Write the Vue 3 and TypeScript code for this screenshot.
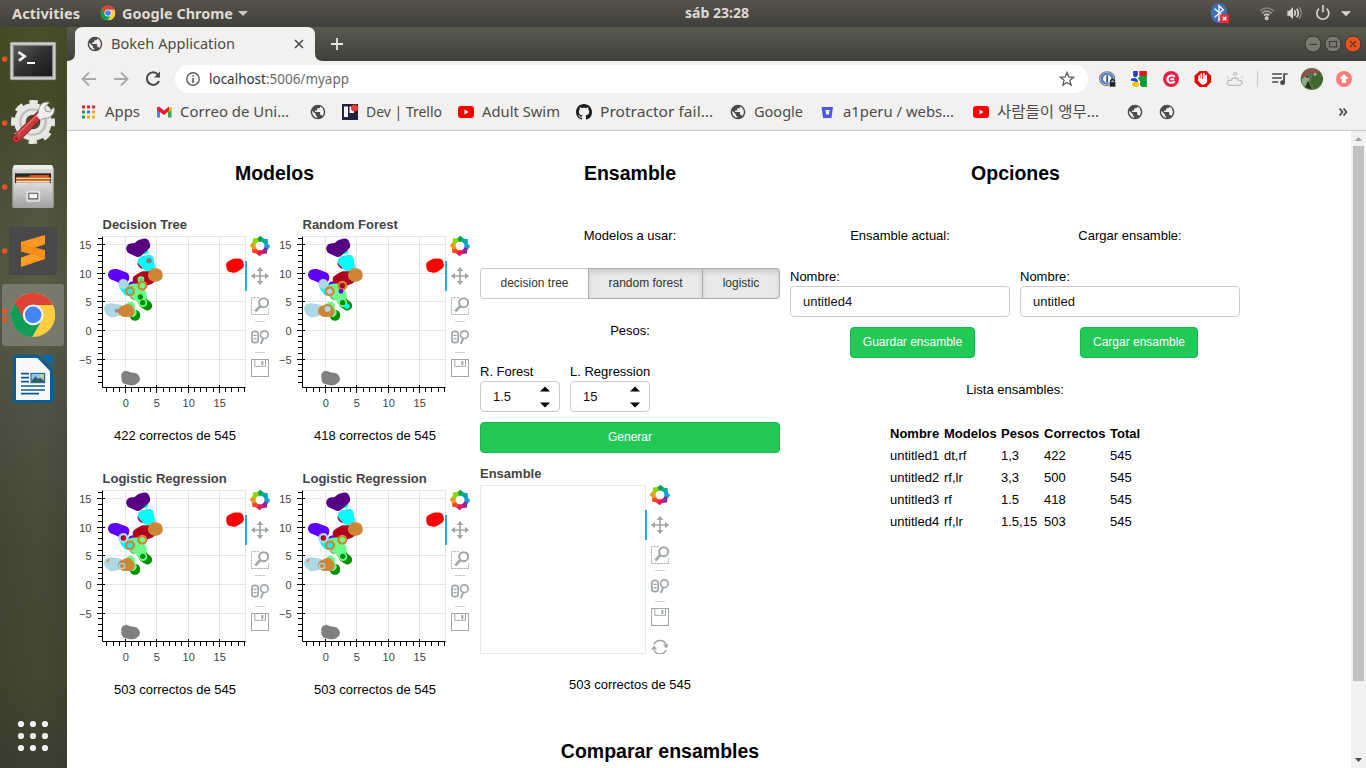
<script setup lang="ts">
import { ref } from 'vue'

type Dot = [number, number, number, string]
type Blob = [string, number, string]

interface Bookmark {
  icon: string
  text?: string
  textWidth?: number
  width: number
}

interface Plot {
  title: string
  caption: string
  extra: Dot[]
}

const bookmarks: Bookmark[] = [
  { icon: 'apps', text: 'Apps', textWidth: 35, width: 76 },
  { icon: 'gmail', text: 'Correo de Uni…', textWidth: 109, width: 154 },
  { icon: 'globe', width: 32 },
  { icon: 'trello', text: 'Dev | Trello', textWidth: 76, width: 116 },
  { icon: 'youtube', text: 'Adult Swim', textWidth: 78, width: 118 },
  { icon: 'github', text: 'Protractor fail…', textWidth: 113, width: 154 },
  { icon: 'globe', text: 'Google', textWidth: 49, width: 89 },
  { icon: 'bitbucket', text: 'a1peru / webs…', textWidth: 111, width: 154 },
  { icon: 'youtube', text: '사람들이 앵무…', textWidth: 102, width: 154 },
  { icon: 'globe', width: 32 },
  { icon: 'globe', width: 32 },
]

const INDIGO = '#560082'
const CYAN = '#00ffff'
const CRIMSON = '#b00020'
const VIOLET = '#5f00ff'
const SKY = '#add8e6'
const LIME = '#6bff8b'
const GREEN = '#009000'
const PERU = '#cd8734'
const GREY = '#808080'
const RED = '#ff0000'

// Clusters as [outline, marker diameter, colour], back to front.
const clusters: Blob[] = [
  ['M225 124V123', 18, CYAN],
  ['M184 116 204 125 225 106 223 101 212 104 200 114Z', 31, INDIGO],
  ['M216 160 218 163', 27, CRIMSON],
  ['M247 172 244 180', 25, SKY],
  ['M219 154 236 150 238 165 231 167Z', 31, CYAN],
  ['M188 228 190 232', 28, VIOLET],
  ['M190 258 194 260', 20, GREY],
  ['M130 194 138 193 162 202 160 208 143 199Z', 32, VIOLET],
  ['M163 230 173 243', 29, CYAN],
  ['M204 209 220 199 236 199 241 206 222 214 207 215Z', 31, CRIMSON],
  ['M254 195 258 195', 41, PERU],
  ['M195 315 195 317', 31, GREEN],
  ['M217 273 221 279 232 287', 29, GREEN],
  ['M187 236 201 235 213 248 216 258 208 261 194 252Z', 29, LIME],
  ['M181 290V291', 30, LIME],
  ['M186 305 187 308', 26, LIME],
  ['M217 276 219 278', 26, LIME],
  ['M118 296 121 302 127 306 146 301 148 300 126 296Z', 32, SKY],
  ['M159 303 172 297 175 298 179 305 163 306Z', 30, PERU],
  ['M168 497 169 508 180 511 190 511 195 507 193 503 175 500Z', 29, GREY],
  ['M483 166 484 172 493 174 507 165 506 160 495 160Z', 29, RED],
]

const logistic: Dot[] = [
  [160, 222, 15, SKY], [160, 222, 8, CRIMSON],
  [180, 244, 15, PERU], [180, 244, 8, CYAN],
  [217, 227, 15, PERU], [217, 227, 8, LIME],
  [218, 277, 8, GREEN],
  [116, 292, 6, PERU], [119, 295, 6, SKY],
  [156, 306, 10, SKY], [156, 306, 6, PERU],
]

const plots: Plot[] = [
  {
    title: 'Decision Tree',
    caption: '422 correctos de 545',
    extra: [
      [237, 152, 8, GREY], [160, 222, 15, SKY],
      [180, 244, 15, PERU], [180, 244, 8, CYAN],
      [213, 209, 10, LIME], [213, 209, 5, '#55d060'],
      [217, 227, 15, PERU], [217, 227, 8, LIME],
      [211, 261, 8, GREEN], [218, 278, 8, GREEN], [140, 302, 6, '#9b8b8b'],
    ],
  },
  {
    title: 'Random Forest',
    caption: '418 correctos de 545',
    extra: [
      [160, 222, 15, SKY],
      [179, 244, 15, PERU], [179, 244, 8, SKY],
      [217, 227, 15, PERU], [217, 227, 8, CRIMSON],
      [213, 244, 7, VIOLET], [218, 278, 8, GREEN],
      [231, 289, 8, CYAN], [173, 297, 9, SKY],
    ],
  },
  { title: 'Logistic Regression', caption: '503 correctos de 545', extra: logistic },
  { title: 'Logistic Regression', caption: '503 correctos de 545', extra: logistic },
]

const xs = [0, 5, 10, 15]
const ys = [15, 10, 5, 0, -5]
const px = (v: number) => 55.5 + Math.round(v * 6.25)
const py = (v: number) => 120.5 - Math.round(v * 5.74)
const minorX = Array.from({ length: 23 }, (_, i) => i - 3)
const minorY = Array.from({ length: 26 }, (_, i) => i - 9)
const label = (v: number) => (v < 0 ? '−' + -v : String(v))

const petals = ['#00a651', '#00a99d', '#1b9de2', '#92278f', '#ed145b', '#f1481e', '#f7941d', '#8dd600']

const choices = ref([
  { name: 'decision tree', on: false, width: 108 },
  { name: 'random forest', on: true, width: 115 },
  { name: 'logistic', on: true, width: 77 },
])
const rf = ref('1.5')
const lr = ref('15')
const saveName = ref('untitled4')
const loadName = ref('untitled')

const rows = [
  ['untitled1', 'dt,rf', '1,3', '422', '545'],
  ['untitled2', 'rf,lr', '3,3', '500', '545'],
  ['untitled3', 'rf', '1.5', '418', '545'],
  ['untitled4', 'rf,lr', '1.5,15', '503', '545'],
]
</script>

<template>
  <svg class="defs" width="0" height="0">
    <defs>
      <linearGradient id="metal" x1="0" y1="0" x2="0" y2="1">
        <stop offset="0" stop-color="#dcdcda" /><stop offset="1" stop-color="#a3a3a1" />
      </linearGradient>
      <linearGradient id="screen" x1="0" y1="0" x2="1" y2="1">
        <stop offset="0" stop-color="#5a5a5a" /><stop offset="0.5" stop-color="#303030" /><stop offset="1" stop-color="#181818" />
      </linearGradient>
      <symbol id="chrome" viewBox="-66 -66 132 132">
        <circle r="66" fill="#ffcd40" />
        <path d="M-57-33A66 66 0 0 1 57-33L60-29H0L-26 15Z" fill="#db4437" />
        <path d="M-55-36A66 66 0 0 0-3 66L26 15 0 20-26 15Z" fill="#0f9d58" />
        <circle r="31" fill="#f1f1f1" /><circle r="24.5" fill="#4285f4" />
      </symbol>
      <symbol id="globe" viewBox="1 1 22 22">
        <path fill="#4b4b4b" d="M12 2C6.480 2 2 6.480 2 12s4.480 10 10 10 10-4.480 10-10S17.520 2 12 2zm-1 17.930c-3.950-.49-7-3.850-7-7.930 0-.62.08-1.210.21-1.790L9 15v1c0 1.100.9 2 2 2v1.930zm6.900-2.540c-.26-.81-1-1.390-1.900-1.390h-1v-3c0-.55-.45-1-1-1H8v-2h2c.55 0 1-.45 1-1V7h2c1.100 0 2-.9 2-2v-.41c2.930 1.190 5 4.060 5 7.410 0 2.080-.8 3.970-2.100 5.390z" />
      </symbol>
      <symbol id="tools" viewBox="0 0 72 540">
        <g transform="translate(36 30)">
          <path v-for="(c, i) in petals" :key="c" d="M-11-20 1-31 12-22 8-13-8-13Z" :fill="c" :transform="`rotate(${i * 45})`" />
        </g>
        <g fill="none" stroke="#a1a6a9" stroke-width="5">
          <path d="M11 120H61M36 95V145" />
          <g fill="#a1a6a9" stroke="none"><path d="M36 93 46 105H26ZM36 147 46 135H26ZM9 120 21 110V130ZM63 120 51 110V130Z" /></g>
          <path d="M32 185H10.500V235.500H61.500V220" stroke-width="3" stroke-dasharray="6 3" />
          <circle cx="47" cy="200" r="13.500" stroke-width="6" /><path d="M37 210 22 226" stroke-width="8" />
          <path d="M21 256.500H51M21 349.500H51" stroke="#cfcfcf" stroke-width="3" />
          <rect x="11.500" y="286" width="19" height="34" rx="9" stroke-width="5" />
          <path d="M16 298H26M16 308H26" stroke-width="4" />
          <circle cx="49" cy="296" r="11.500" stroke-width="5" /><path d="M46 307 38 324" stroke-width="6" />
          <rect x="10.500" y="370.500" width="51" height="51" stroke-width="3" />
          <path d="M20.500 371V391H52.500V371" stroke-width="3" /><path d="M43 375V387" stroke-width="6" />
        </g>
      </symbol>
    </defs>
  </svg>

  <div class="desktop">
    <header class="topbar">
      <svg class="menu" width="260" height="27">
        <text x="12" y="18.500" textLength="68" lengthAdjust="spacingAndGlyphs">Activities</text>
        <use href="#chrome" x="100.500" y="5.500" width="15" height="15" />
        <text x="122" y="18.500" textLength="111" lengthAdjust="spacingAndGlyphs">Google Chrome</text>
        <path d="M238 11H248L243 16Z" fill="#cfccc5" />
      </svg>
      <svg class="clock" width="64" height="27">
        <text x="0" y="18" textLength="64" lengthAdjust="spacingAndGlyphs">sáb 23:28</text>
      </svg>
      <svg class="status" width="161" height="27" viewBox="135 0 483 81">
        <rect x="153" y="9" width="48" height="60" rx="24" fill="#3f72ad" />
        <path d="M164 26 190 49 177 61V17L190 29 164 52" fill="none" stroke="#fff" stroke-width="4" />
        <rect x="180" y="43" width="27" height="26" rx="4" fill="#e0343c" /><path d="M188 50 199 61M199 50 188 61" stroke="#fff" stroke-width="4" />
        <g fill="none" stroke="#d6d3cc" stroke-width="5">
          <path d="M300 33Q320 15 341 33" stroke="#85827b" /><path d="M306 40Q320 27 335 40" stroke="#a09d96" /><path d="M312 46Q320 40 328 46" />
          <circle cx="320" cy="55" r="3.500" />
          <path d="M403 31Q409 39 403 47" /><path d="M410 26Q420 39 410 52" /><path d="M417 21Q431 39 417 57" stroke="#85827b" />
          <path d="M477 26A18 18 0 1 0 500 26M489 15V37" />
        </g>
        <path d="M382 32H388L399 21V57L388 47H382ZM543 34H573L558 49Z" fill="#d6d3cc" />
      </svg>
    </header>

    <div class="body">
      <nav class="dock">
        <svg width="67" height="64" viewBox="0 -9 201 192">
          <circle cx="14" cy="87" r="8" fill="#e95420" />
          <rect x="31" y="37" width="136" height="112" rx="3" fill="#d3d3d1" stroke="#999" stroke-width="2" />
          <rect x="40" y="46" width="118" height="94" fill="url(#screen)" stroke="#888" stroke-width="4" />
          <path d="M55 66 74 79 57 92" fill="none" stroke="#f2f2f2" stroke-width="8" /><path d="M81 99H105" stroke="#fff" stroke-width="6" />
        </svg>
        <svg width="67" height="64" viewBox="0 183 201 192">
          <circle cx="14" cy="279" r="8" fill="#e95420" />
          <circle cx="99" cy="276" r="39" fill="none" stroke="#e6e6e4" stroke-width="34" />
          <circle cx="99" cy="276" r="59" fill="none" stroke="#e6e6e4" stroke-width="14" stroke-dasharray="25 21.338" stroke-dashoffset="12.500" />
          <circle cx="99" cy="276" r="38" fill="none" stroke="#bdbdbb" stroke-width="7" />
          <path d="M49 326 122 252" stroke="#8c1c1c" stroke-width="25" stroke-linecap="round" />
          <path d="M49 326 122 252" stroke="#c8393b" stroke-width="20" stroke-linecap="round" />
          <path d="M53 313 118 248" stroke="#e26967" stroke-width="4" />
          <circle cx="49" cy="326" r="4" fill="#7a1818" />
          <path d="M113 253C117 244 115 234 122 225 128 217 140 214 148 218L134 231 137 243 149 246 161 232C167 245 158 260 143 264L130 266 122 271 108 257Z" fill="#efefed" stroke="#929292" stroke-width="3" />
        </svg>
        <svg width="67" height="64" viewBox="0 375 201 192">
          <circle cx="14" cy="471" r="8" fill="#e95420" />
          <path d="M42 405H156L161 418V530Q160 534 155 534H43Q38 534 37 530V418Z" fill="url(#metal)" />
          <path d="M42 405H156L160 418H38Z" fill="#ececea" />
          <rect x="45" y="430" width="108" height="30" fill="#262626" />
          <path d="M49 440H86L91 435H147V441H151V458H48Z" fill="#d65013" /><path d="M48 445H151M48 454H151" stroke="#f5dba9" stroke-width="4" />
          <path d="M42 461 52 457H146L156 461V531H42Z" fill="url(#metal)" />
          <rect x="81" y="485" width="37" height="28" rx="5" fill="#999" stroke="#e6e6e6" stroke-width="5" /><rect x="87" y="491" width="25" height="15" fill="#f4f4f4" stroke="#555" stroke-width="2" />
        </svg>
        <svg width="67" height="64" viewBox="0 567 201 192">
          <circle cx="14" cy="663" r="8" fill="#e95420" />
          <rect x="27" y="591" width="144" height="144" rx="7" fill="#484848" />
          <path d="M63 636 135 615V643L105 653 135 661V687L63 711V683L94 673 63 664Z" fill="#ff9820" />
          <path d="M63 664 94 673 135 687V661L105 653 63 640Z" fill="#f58e17" /><path d="M94 673 124 682 63 702V683Z" fill="#ff9f28" />
        </svg>
        <svg width="67" height="64" viewBox="0 759 201 192">
          <rect x="6" y="762" width="186" height="186" rx="10" fill="#76796c" />
          <circle cx="14" cy="843" r="8" fill="#e95420" /><circle cx="14" cy="868" r="8" fill="#e95420" />
          <use href="#chrome" x="33" y="788" width="133" height="133" />
        </svg>
        <svg width="67" height="64" viewBox="0 951 201 192">
          <path d="M43 975H116L159 1019V1115Q159 1119 155 1119H43Q39 1119 39 1115V979Q39 975 43 975Z" fill="#0d5c94" />
          <path d="M48 984H112L150 1023V1110H48Z" fill="#f8f8f8" />
          <path d="M122 975H159V1012Z" fill="#0869a8" />
          <path d="M63 1031H87M63 1043H87M63 1055H87M63 1068H135M63 1080H135M63 1091H117" stroke="#0d5c94" stroke-width="5" />
          <rect x="93" y="1030" width="41" height="28" fill="#8bc8ec" stroke="#0d5c94" stroke-width="3" /><circle cx="126" cy="1038" r="5" fill="#f4c64a" /><path d="M95 1057V1052L107 1039 114 1047 120 1043 133 1052V1057Z" fill="#355c61" />
        </svg>
        <svg class="grid9" width="67" height="64" viewBox="0 0 67 64">
          <template v-for="r in 3" :key="r"><circle v-for="c in 3" :key="c" :cx="9 + c * 12" :cy="8 + r * 12" r="3.100" fill="#f1f1f1" /></template>
        </svg>
      </nav>

      <main class="window">
        <div class="tabstrip">
          <svg width="1299" height="34">
            <path d="M0 34Q8 34 8 26V8Q8 0 16 0H240Q248 0 248 8V26Q248 34 256 34Z" fill="#f2f1f0" />
            <use href="#globe" x="20" y="9" width="16" height="16" />
            <text x="44" y="22" class="ui" textLength="124" lengthAdjust="spacingAndGlyphs">Bokeh Application</text>
            <path d="M228 13 236 21M236 13 228 21" stroke="#4a4a4a" stroke-width="1.600" />
            <path d="M264 17H276M270 11V23" stroke="#e8e7e2" stroke-width="1.800" />
            <g stroke="#37362f"><circle cx="1246" cy="17" r="8" fill="#7a796e" /><circle cx="1266" cy="17" r="8" fill="#7a796e" /><circle cx="1286" cy="17" r="8" fill="#f2501e" /></g>
            <path d="M1242 17.500H1250M1262.500 14.500H1269.500V20H1262.500ZM1283 14 1289 20M1289 14 1283 20" fill="none" stroke="#3a3934" stroke-width="1.200" />
          </svg>
        </div>
        <div class="toolbar">
          <svg class="nav" width="108" height="36">
            <g fill="none" stroke-width="1.800">
              <path d="M29 18H15.500M22 11.500 15.500 18 22 24.500M47 18H60.500M54 11.500 60.500 18 54 24.500" stroke="#aaa9a8" />
              <path d="M91 13.500A6.300 6.300 0 1 0 92 20" stroke="#4a4a4a" stroke-width="2" />
            </g>
            <path d="M93 10.500V16.500H87Z" fill="#4a4a4a" />
          </svg>
          <div class="omnibox">
            <svg width="34" height="28"><circle cx="18" cy="14" r="6.200" fill="none" stroke="#5a5a5a" stroke-width="1.400" /><path d="M18 13V18M18 10V11.600" stroke="#5a5a5a" stroke-width="1.600" /></svg>
            <svg class="url" width="145" height="28"><text x="0" y="19" class="ui" textLength="140" lengthAdjust="spacingAndGlyphs"><tspan fill="#333">localhost</tspan><tspan fill="#6b6b6b">:5006/myapp</tspan></text></svg>
            <svg class="star" width="16" height="16" viewBox="0 0 16 16"><path d="M8 1.500 9.800 6 14.600 6.300 10.900 9.300 12.100 14 8 11.400 3.900 14 5.100 9.300 1.400 6.300 6.200 6Z" fill="none" stroke="#5a5a5a" stroke-width="1.300" /></svg>
          </div>
          <svg class="ext" width="278" height="36" viewBox="798 3 770 108" preserveAspectRatio="none">
            <g fill="none">
              <circle cx="851" cy="56" r="21" stroke="#777" stroke-width="3" /><circle cx="851" cy="56" r="15" stroke="#4d82cf" stroke-width="7" /><path d="M851 46V66" stroke="#555" stroke-width="5" />
            </g>
            <rect x="857" y="65" width="18" height="16" rx="2" fill="#222" stroke="#f2f1f0" stroke-width="2" /><path d="M861 65V61Q866 55 871 61V65" fill="none" stroke="#222" stroke-width="4" />
            <path d="M917 33H961V81H917Z" fill="#fff" /><path d="M940 33H961V48H940Z" fill="#e11" /><path d="M936 55Q943 43 961 48V81H948Q939 76 943 65Z" fill="#009b3a" /><path d="M923 33H936V46Q931 56 923 48ZM917 56Q935 49 937 67L917 62Z" fill="#2340d0" /><ellipse cx="930" cy="73" rx="10" ry="8" fill="#f4c400" />
            <ellipse cx="1028" cy="57" rx="22" ry="24" fill="#ec1c45" /><path d="M1038 51A11 11 0 1 0 1038 64M1026 58H1037" fill="none" stroke="#fff" stroke-width="6" />
            <path d="M1107 33H1126L1139 47V67L1126 81H1107L1093 67V47Z" fill="#ee0000" /><path d="M1106 63V48M1112 58V42M1119 58V41M1125 60V47" stroke="#fff" stroke-width="5" stroke-linecap="round" /><path d="M1103 57H1128V64Q1126 74 1116 74 1108 73 1103 57Z" fill="#fff" />
            <path d="M1192 76Q1182 75 1184 66 1187 60 1194 61 1199 51 1208 54 1214 56 1215 61 1226 61 1225 70 1223 76 1216 76Z" fill="none" stroke="#bcbbb9" stroke-width="4" /><path d="M1200 41Q1206 34 1211 41 1209 46 1205 46 1201 45 1200 41M1183 51 1188 53M1227 50 1221 52" stroke="#bcbbb9" stroke-width="3" fill="none" />
            <path d="M1267.500 33V81" stroke="#cccac8" stroke-width="3" />
            <path d="M1308 42H1335M1308 54H1335M1308 66H1325M1341 68V42H1351" stroke="#4a4a4a" stroke-width="5" fill="none" /><circle cx="1337" cy="68" r="7" fill="#4a4a4a" />
            <ellipse cx="1418" cy="57" rx="31" ry="33" fill="#58704b" /><path d="M1390 46Q1399 21 1428 27L1442 37 1424 44 1411 39 1396 56Z" fill="#8a544b" /><path d="M1420 45 1437 35 1449 55Q1448 77 1427 85L1415 70Z" fill="#3f682c" /><path d="M1391 58 1406 45 1412 60 1400 80Q1388 73 1391 58Z" fill="#8aac8b" /><circle cx="1405" cy="50" r="3" fill="#222" /><circle cx="1427" cy="43" r="4" fill="#c2b4ae" /><path d="M1407 62 1418 88 1399 82Z" fill="#25351c" />
            <ellipse cx="1507" cy="57" rx="22" ry="24" fill="#ff7b78" /><path d="M1507 42 1520 56H1513V69H1501V56H1494Z" fill="#fff" />
          </svg>
        </div>

        <div class="bookmarks">
          <div v-for="(b, i) in bookmarks" :key="i" class="bookmark" :style="{ width: b.width + 'px' }">
            <svg width="16" height="16" viewBox="0 0 16 16">
              <g v-if="b.icon === 'apps'">
                <path d="M2 1.500H5V4.500H2ZM7 1.500H10V4.500H7ZM12 1.500H15V4.500H12Z" fill="#e5233d" />
                <path d="M2 6.500H5V9.500H2ZM2 11.500H5V14.500H2Z" fill="#17a454" /><path d="M7 6.500H10V9.500H7Z" fill="#3b78e7" /><path d="M12 6.500H15V9.500H12ZM12 11.500H15V14.500H12ZM7 11.500H10V14.500H7Z" fill="#f7a916" />
              </g>
              <g v-else-if="b.icon === 'gmail'">
                <path d="M1 4V13.500H4V7Z" fill="#4285f4" /><path d="M12 7 15.500 4V13.500H12Z" fill="#34a853" /><path d="M12 4 15.500 3V6L12 8Z" fill="#fbbc04" /><path d="M1 3.500 3 2.500 8 6.500 13 2.500V7L8 11 3 7.500 1 6Z" fill="#ea1d2c" />
              </g>
              <g v-else-if="b.icon === 'trello'">
                <path d="M0 0H16V16H0Z" fill="#20233a" /><path d="M2 2.500H6V13H2ZM7.500 2.500H12V9H7.500Z" fill="#f4f4f7" /><circle cx="12.500" cy="4" r="3.500" fill="#f33b35" />
              </g>
              <g v-else-if="b.icon === 'youtube'"><rect x="0" y="2" width="16" height="12" rx="3" fill="#f00" /><path d="M6.500 5.500V10.500L10.500 8Z" fill="#fff" /></g>
              <path v-else-if="b.icon === 'github'" fill="#1b1f23" d="M8 0C3.580 0 0 3.580 0 8c0 3.540 2.290 6.530 5.470 7.590.4.070.55-.17.55-.38 0-.19-.01-.82-.01-1.490-2.010.37-2.530-.49-2.690-.94-.09-.23-.48-.94-.82-1.130-.28-.15-.68-.52-.01-.53.63-.01 1.080.58 1.230.82.72 1.210 1.870.87 2.330.66.07-.52.28-.87.51-1.070-1.780-.2-3.640-.89-3.640-3.950 0-.87.31-1.590.82-2.150-.08-.2-.36-1.020.08-2.120 0 0 .67-.21 2.200.82.64-.18 1.320-.27 2-.27s1.360.09 2 .27c1.530-1.040 2.200-.82 2.200-.82.44 1.100.16 1.920.08 2.120.51.56.82 1.270.82 2.150 0 3.070-1.870 3.750-3.650 3.950.29.25.54.73.54 1.480 0 1.070-.01 1.930-.01 2.200 0 .21.15.46.55.38A8 8 0 0 0 16 8c0-4.420-3.580-8-8-8z" />
              <path v-else-if="b.icon === 'bitbucket'" fill="#4c58ee" fill-rule="evenodd" d="M2.500 3H14L12.500 14H4ZM6.500 6 7 10.500H10L10.500 6Z" />
              <use v-else href="#globe" width="16" height="16" />
            </svg>
            <svg v-if="b.text" class="btext" :width="b.textWidth! + 4" height="24">
              <text x="0" y="17" class="ui" :textLength="b.textWidth" lengthAdjust="spacingAndGlyphs">{{ b.text }}</text>
            </svg>
          </div>
          <svg class="more" width="10" height="10"><path d="M1.500 1.500 4.500 5 1.500 8.500M5.500 1.500 8.500 5 5.500 8.500" fill="none" stroke="#444" stroke-width="1.700" /></svg>
        </div>

        <div class="viewport">
          <div class="page">
            <div class="columns">
              <section class="models">
                <h2>Modelos</h2>
                <div class="plots">
                  <figure v-for="(p, i) in plots" :key="i">
                    <svg width="200" height="210">
                      <text x="32.500" y="19" class="ptitle">{{ p.title }}</text>
                      <rect x="32.500" y="26.500" width="143" height="151" fill="#fff" stroke="#e5e5e5" />
                      <path v-for="v in xs" :key="'gx' + v" :d="`M${px(v)} 27V177`" stroke="#e5e5e5" />
                      <path v-for="v in ys" :key="'gy' + v" :d="`M33 ${py(v)}H175`" stroke="#e5e5e5" />
                      <g transform="scale(.33333)">
                        <path v-for="(b, j) in clusters" :key="'b' + j" :d="b[0]" :stroke-width="b[1]" :stroke="b[2]" :fill="b[2]" stroke-linejoin="round" stroke-linecap="round" />
                        <circle v-for="(d, j) in p.extra" :key="'d' + j" :cx="d[0]" :cy="d[1]" :r="d[2]" :fill="d[3]" />
                      </g>
                      <g stroke="#000" fill="none">
                        <path d="M32.500 26.500V177.500H175.500" />
                        <path v-for="v in minorX" :key="'mx' + v" :d="`M${px(v)} 178V182`" />
                        <path v-for="v in minorY" :key="'my' + v" :d="`M28 ${py(v)}H32`" />
                        <path v-for="v in xs" :key="'tx' + v" :d="`M${px(v)} 175V183`" />
                        <path v-for="v in ys" :key="'ty' + v" :d="`M27 ${py(v)}H35`" />
                      </g>
                      <text v-for="v in xs" :key="'lx' + v" :x="px(v) + .2" y="197" text-anchor="middle" class="tick">{{ label(v) }}</text>
                      <text v-for="v in ys" :key="'ly' + v" x="21.500" :y="py(v) + 4" text-anchor="end" class="tick">{{ label(v) }}</text>
                      <rect x="175" y="51" width="2" height="30" fill="#26aae1" />
                      <use href="#tools" x="178" y="26" width="24" height="180" />
                    </svg>
                    <figcaption>{{ p.caption }}</figcaption>
                  </figure>
                </div>
              </section>

              <section class="ensemble">
                <h2>Ensamble</h2>
                <p class="using">Modelos a usar:</p>
                <div class="group">
                  <button v-for="c in choices" :key="c.name" :class="{ on: c.on }" :style="{ width: c.width + 'px' }" @click="c.on = !c.on">{{ c.name }}</button>
                </div>
                <p class="weights">Pesos:</p>
                <div class="spinners">
                  <label>R. Forest<span class="spin"><input v-model="rf" /><svg width="10" height="22"><path d="M0 5.500 5 .5 10 5.500ZM0 16.500 5 21.500 10 16.500Z" /></svg></span></label>
                  <label>L. Regression<span class="spin"><input v-model="lr" /><svg width="10" height="22"><path d="M0 5.500 5 .5 10 5.500ZM0 16.500 5 21.500 10 16.500Z" /></svg></span></label>
                </div>
                <button class="go wide">Generar</button>
                <svg class="blank" width="200" height="201">
                  <text x="0" y="25" class="ptitle">Ensamble</text>
                  <rect x=".5" y="32.500" width="165" height="168" fill="#fff" stroke="#e9e9e9" />
                  <rect x="165" y="57" width="2" height="30" fill="#26aae1" />
                  <use href="#tools" x="168" y="32" width="24" height="180" />
                  <path d="M174 191.500A6.500 6.500 0 0 1 186 191.500M174 197A6.500 6.500 0 0 0 186 197" fill="none" stroke="#a1a6a9" stroke-width="1.600" />
                  <path d="M183 191.500H189L186 195.500ZM171 196.500H177L174 192.500Z" fill="#a1a6a9" />
                </svg>
                <p class="result">503 correctos de 545</p>
              </section>

              <section class="options">
                <h2>Opciones</h2>
                <div class="pair">
                  <div class="half">
                    <p>Ensamble actual:</p>
                    <label>Nombre:<input v-model="saveName" /></label>
                    <button class="go save">Guardar ensamble</button>
                  </div>
                  <div class="half">
                    <p>Cargar ensamble:</p>
                    <label>Nombre:<input v-model="loadName" /></label>
                    <button class="go load">Cargar ensamble</button>
                  </div>
                </div>
                <p class="list">Lista ensambles:</p>
                <table>
                  <thead><tr><th>Nombre</th><th>Modelos</th><th>Pesos</th><th>Correctos</th><th>Total</th></tr></thead>
                  <tbody><tr v-for="r in rows" :key="r[0]"><td v-for="(c, j) in r" :key="j">{{ c }}</td></tr></tbody>
                </table>
              </section>
            </div>
            <h2 class="compare">Comparar ensambles</h2>
          </div>
          <div class="scrollbar">
            <svg width="15" height="15"><path d="M4 10H11L7.500 6Z" fill="#a0a0a0" /></svg>
            <div class="thumb"></div>
            <svg class="down" width="15" height="15"><path d="M4 5H11L7.500 9Z" fill="#505050" /></svg>
          </div>
        </div>
      </main>
    </div>
  </div>
</template>

<style>
body { margin: 0; overflow: hidden; }
</style>

<style scoped>
* { box-sizing: border-box; }
svg { display: block; flex: none; }
.defs { position: absolute; }
.desktop { width: 1366px; height: 768px; display: flex; flex-direction: column; overflow: hidden; font: 13px/16px "Liberation Sans", Arial, sans-serif; color: #000; }
.topbar { height: 27px; flex: none; display: flex; background: linear-gradient(#56534b, #403f3a); }
.topbar text { font: bold 14px "Noto Sans", sans-serif; fill: #dfdbd2; }
.clock { margin-left: 425px; }
.status { margin-left: auto; }
.body { display: flex; height: 741px; }
.dock { width: 67px; flex: none; display: flex; flex-direction: column; background: linear-gradient(90deg, #0001, #0000 60%, #2222), linear-gradient(#4a5029 0, #454b29 70px, #505239 150px, #5b5e49 280px, #505343 390px, #464a37 520px, #434830 650px, #3c3f31 100%); }
.grid9 { margin-top: auto; margin-bottom: 0; }
.window { width: 1299px; display: flex; flex-direction: column; background: #f2f1f0; }
.tabstrip { height: 34px; flex: none; background: linear-gradient(#5b5a4e, #403f3a); }
.ui { font: 14.5px "Noto Sans", "Noto Sans CJK KR", sans-serif; fill: #4c4c4c; }
.toolbar { height: 36px; display: flex; flex: none; align-items: center; }
.omnibox { width: 913px; height: 28px; border-radius: 14px; background: #fff; display: flex; align-items: center; }
.star { margin-left: auto; margin-right: 13px; }
.bookmarks { height: 34px; flex: none; display: flex; align-items: center; padding: 0 18px 4px 13px; border-bottom: 1px solid #cbc9c7; }
.bookmark { display: flex; align-items: center; flex: none; }
.btext { margin-left: 8px; }
.bookmark:first-child .btext { margin-left: 9px; }
.more { margin-left: auto; }
.viewport { display: flex; height: 637px; background: #fff; }
.page { width: 1284px; overflow: hidden; }
.columns { display: flex; gap: 10px; padding-left: 3px; height: 608px; }
h2 { margin: 0; height: 79px; padding-top: 30px; font-size: 19.5px; line-height: 24px; text-align: center; font-weight: bold; }
.models { width: 400px; }
.models h2 { padding-left: 9px; }
.plots { display: flex; flex-wrap: wrap; }
figure { margin: 0; width: 200px; height: 254px; }
figcaption { padding: 8px 0 0 10px; text-align: center; }
.ptitle { font: bold 13px "Liberation Sans", sans-serif; fill: #444; }
.tick { font: 11px "Liberation Sans", sans-serif; fill: #444; }
.ensemble { width: 300px; }
p { margin: 0; height: 16px; text-align: center; }
.using { margin-top: 18px; }
.group { display: flex; margin-top: 24px; height: 31px; }
button { font: 12px "Liberation Sans", sans-serif; border: 1px solid #ccc; background: #fff; color: #333; height: 31px; padding: 0 0 2px; }
.group button:first-child { border-radius: 4px 0 0 4px; border-right: 0; }
.group button:last-child { border-radius: 0 4px 4px 0; }
.group button.on { background: #e9e9e9; border-color: #adadad; box-shadow: inset 0 3px 5px rgba(0, 0, 0, .13); }
.group button + button.on + button.on { border-left: 0; }
.weights { margin-top: 24px; }
.spinners { display: flex; gap: 10px; margin-top: 25px; }
.spinners label { width: 80px; white-space: nowrap; }
.spin { display: flex; width: 80px; height: 31px; border: 1px solid #ccc; border-radius: 4px; margin-top: 1px; align-items: center; }
input { display: block; font: 13px "Liberation Sans", sans-serif; color: #111; padding: 0 12px; border: 1px solid #ccc; border-radius: 4px; height: 31px; width: 220px; margin-top: 1px; outline: 0; }
.spin input { border: 0; width: 59px; height: 27px; background: none; margin-top: 0; }
.go { background: #22c957; border-color: #11b94a; color: #fff; border-radius: 4px; display: block; }
.wide { width: 300px; margin-top: 10px; }
.result { margin-top: 23px; }
.options { width: 450px; }
.options h2 { padding-left: 1px; }
.pair { display: flex; gap: 10px; margin-top: 18px; }
.half { width: 220px; }
.half label { display: block; margin-top: 25px; }
.save { width: 125px; margin: 10px 0 0 60px; }
.load { width: 118px; margin: 10px 0 0 60px; }
.list { margin-top: 24px; }
table { margin: 25px 0 0 100px; border-collapse: collapse; table-layout: fixed; }
th, td { padding: 0; height: 22px; line-height: 16px; text-align: left; white-space: nowrap; }
th:nth-child(1) { width: 54px; }
th:nth-child(2) { width: 57px; }
th:nth-child(3) { width: 43px; }
th:nth-child(4) { width: 66px; }
.compare { height: 29px; padding: 0; margin-left: 69px; width: 1048px; }
.scrollbar { width: 15px; background: #f1f1f1; display: flex; flex-direction: column; align-items: center; }
.thumb { width: 11px; height: 535px; background: #c1c1c1; }
.down { margin-top: auto; }
</style>
